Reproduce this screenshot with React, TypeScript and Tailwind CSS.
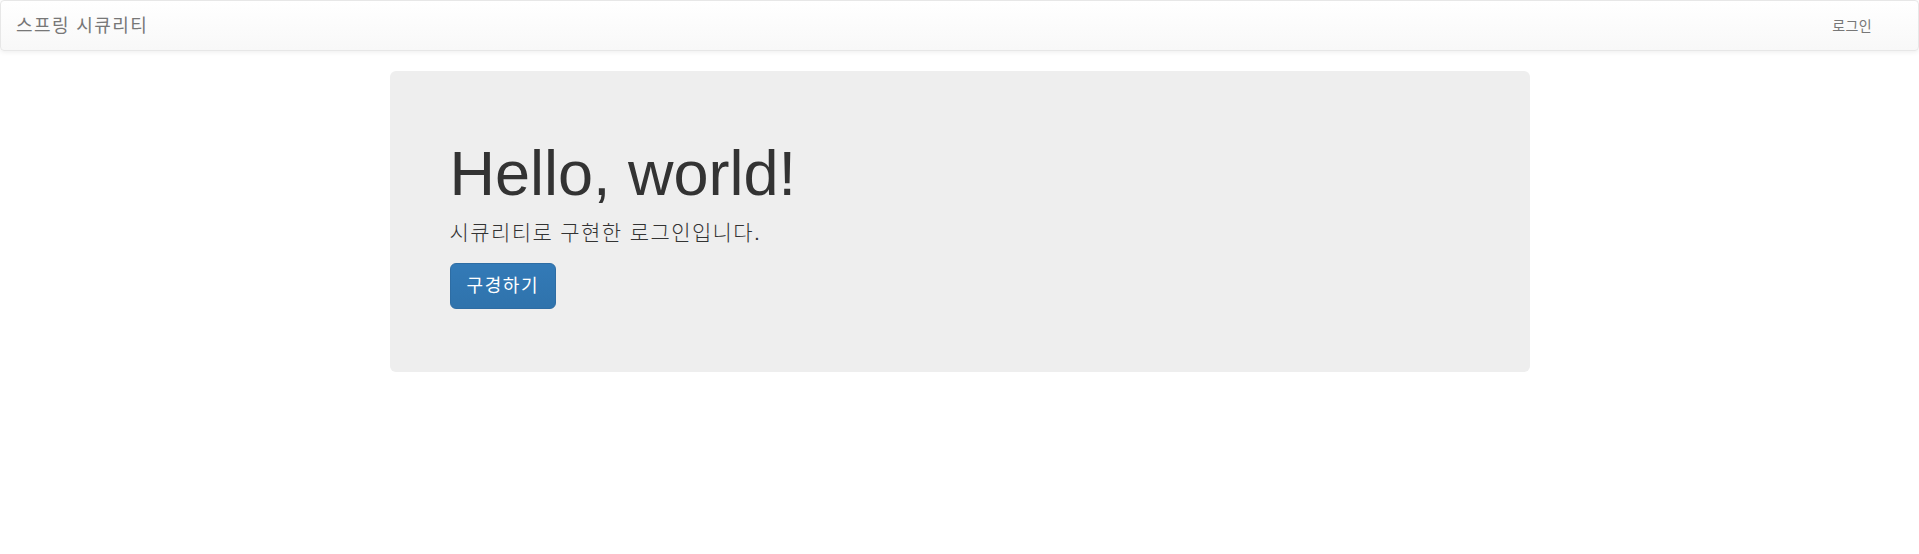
import React from "react";

export default function App() {
  const font = {
    fontFamily:
      '"Liberation Sans", Arial, "Noto Sans CJK KR", sans-serif',
  };
  return (
    <div className="min-h-[554px] bg-white text-[#333] text-[14px]" style={font}>
      <nav className="h-[51px] border border-[#e7e7e7] rounded-[4px] bg-gradient-to-b from-white to-[#f8f8f8] shadow-[inset_0_1px_0_rgba(255,255,255,0.15),0_1px_5px_rgba(0,0,0,0.075)] flex items-center justify-between">
        <a className="px-[15px] text-[18px] leading-[20px] tracking-[1.4px] text-[#777]">스프링 시큐리티</a>
        <a className="pl-[15px] pr-[46px] text-[14px] leading-[20px] tracking-[0.4px] text-[#777]">로그인</a>
      </nav>
      <div className="w-[1170px] mx-auto px-[15px] mt-[20px]">
        <div className="bg-[#eee] rounded-[6px] px-[60px] pt-[48px] pb-[48px]">
          <h1 className="text-[63px] leading-[1.1] mt-[20px] mb-[10px] font-medium text-[#333]">
            Hello, world!
          </h1>
          <p className="text-[21px] leading-[30px] font-light mb-[15px] tracking-[1.4px] text-[#333]">
            시큐리티로 구현한 로그인입니다.
          </p>
          <p className="mb-[15px] flex">
            <a className="inline-block h-[46px] px-[16px] py-[10px] text-[18px] leading-[24px] tracking-[1.6px] text-white rounded-[6px] border border-[#2e6da4] bg-gradient-to-b from-[#337ab7] to-[#2f73ac]">
              구경하기
            </a>
          </p>
        </div>
      </div>
    </div>
  );
}
